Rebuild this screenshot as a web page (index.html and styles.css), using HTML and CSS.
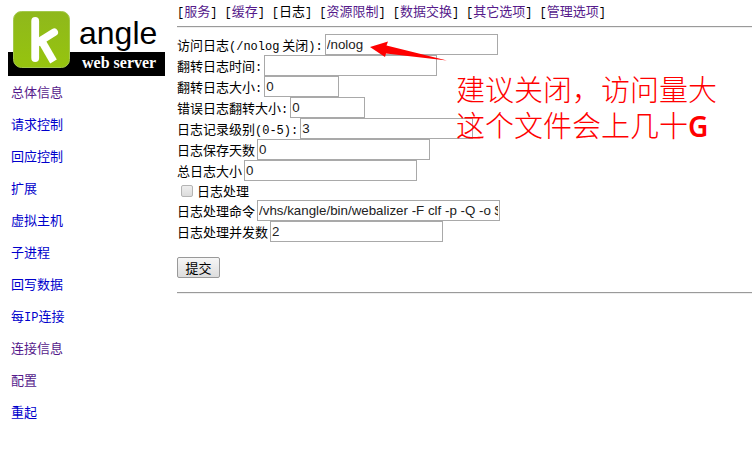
FILE: index.html
```html
<!DOCTYPE html>
<html lang="zh-CN">
<head>
<meta charset="utf-8">
<title>kangle web server</title>
<link rel="stylesheet" href="styles.css">
</head>
<body>
<div class="page">
  <aside class="sidebar">
    <svg class="logo" viewBox="0 0 157 66" role="img" aria-label="kangle web server">
      <defs>
        <linearGradient id="tile" x1="0" y1="0" x2="0" y2="1">
          <stop offset="0" stop-color="#8fb81c"/>
          <stop offset="1" stop-color="#96c40e"/>
        </linearGradient>
      </defs>
      <rect x="0" y="42" width="157" height="24" fill="#000"/>
      <rect x="5.500" y="1.500" width="56" height="56" rx="8" fill="url(#tile)" stroke="#a3c94b"/>
      <path d="M27.200 11V48" fill="none" stroke="#fff" stroke-width="7.800" stroke-linecap="round"/>
      <path d="M46.200 22.300L29 33" fill="none" stroke="#fff" stroke-width="7.600" stroke-linecap="round"/>
      <path d="M32.500 29L45.500 51.500" fill="none" stroke="#fff" stroke-width="7.600"/>
      <text class="logo-name" x="71" y="34">angle</text>
      <text class="logo-sub" x="74" y="58">web server</text>
    </svg>
    <nav class="menu">
      <a class="visited" href="#">总体信息</a>
      <a href="#">请求控制</a>
      <a href="#">回应控制</a>
      <a href="#">扩展</a>
      <a href="#">虚拟主机</a>
      <a href="#">子进程</a>
      <a href="#">回写数据</a>
      <a href="#">每<span class="latin">IP</span>连接</a>
      <a class="visited" href="#">连接信息</a>
      <a class="visited" href="#">配置</a>
      <a href="#">重起</a>
    </nav>
  </aside>
  <main class="content">
    <nav class="tabs">
      <span class="tab">[<a class="visited" href="#">服务</a>]</span>
      <span class="tab">[<a class="visited" href="#">缓存</a>]</span>
      <span class="tab">[<span class="current">日志</span>]</span>
      <span class="tab">[<a class="visited" href="#">资源限制</a>]</span>
      <span class="tab">[<a class="visited" href="#">数据交换</a>]</span>
      <span class="tab">[<a class="visited" href="#">其它选项</a>]</span>
      <span class="tab">[<a class="visited" href="#">管理选项</a>]</span>
    </nav>
    <hr>
    <form class="form">
      <div class="row"><label for="access">访问日志<span class="latin">(/nolog</span> 关闭<span class="latin">):</span></label><input type="text" id="access" value="/nolog"></div>
      <div class="row"><label for="rotate-time">翻转日志时间<span class="latin">:</span></label><input type="text" id="rotate-time"></div>
      <div class="row"><label for="rotate-size">翻转日志大小<span class="latin">:</span></label><input class="short" type="text" id="rotate-size" value="0"></div>
      <div class="row"><label for="error-size">错误日志翻转大小<span class="latin">:</span></label><input class="short" type="text" id="error-size" value="0"></div>
      <div class="row"><label for="level">日志记录级别<span class="latin">(0-5):</span></label><input type="text" id="level" value="3"></div>
      <div class="row"><label for="days">日志保存天数</label><input type="text" id="days" value="0"></div>
      <div class="row"><label for="total">总日志大小</label><input type="text" id="total" value="0"></div>
      <div class="row check"><input type="checkbox" id="handle"><label for="handle">日志处理</label></div>
      <div class="row"><label for="command">日志处理命令</label><input class="long" type="text" id="command" value="/vhs/kangle/bin/webalizer -F clf -p -Q -o $"></div>
      <div class="row"><label for="workers">日志处理并发数</label><input type="text" id="workers" value="2"></div>
      <button class="submit" type="submit">提交</button>
    </form>
    <hr>
    <svg class="arrow" viewBox="0 0 78 22" aria-hidden="true">
      <path d="M0 7L18 1.500L16.500 5.500L77 20.500L16 13.500L15 17Z" fill="#f00"/>
    </svg>
    <p class="note">建议关闭，访问量大<br>这个文件会上几十<b>G</b></p>
  </main>
</div>
</body>
</html>
```
FILE: styles.css
```css
* {
  box-sizing: border-box;
}

body {
  margin: 0;
  background: #fff;
  color: #000;
  font-family: "Noto Sans CJK SC", sans-serif;
  font-size: 13px;
  line-height: 20px;
}

a {
  color: #0000cc;
  text-decoration: none;
}

a.visited {
  color: #551a8b;
}

.page {
  display: grid;
  grid-template-columns: 169px 1fr;
}

.sidebar {
  padding: 10px 4px 0 8px;
}

.logo {
  display: block;
  width: 100%;
}

.logo-name {
  font-family: "Liberation Sans", Arial, sans-serif;
  font-size: 32px;
}

.logo-sub {
  font-family: "Liberation Serif", serif;
  font-size: 16px;
  font-weight: bold;
  fill: #fff;
}

.menu {
  display: flex;
  flex-direction: column;
  align-items: flex-start;
  gap: 12px;
  padding: 6px 3px;
}

.latin {
  font-family: "Liberation Mono", monospace;
  font-size: 12px;
  line-height: 1;
}

.content {
  position: relative;
  min-width: 0;
  padding: 1px 0 0 8px;
}

.tabs {
  display: flex;
  gap: 7px;
  height: 22px;
  white-space: nowrap;
}

.tab {
  font-family: "Liberation Mono", monospace;
  font-size: 12px;
}

.tab a,
.current {
  font-family: "Noto Sans CJK SC", sans-serif;
  font-size: 13px;
}

hr {
  height: 2px;
  margin: 3px 0 0;
  border: 0;
  border-top: 1px solid #9a9a9a;
  border-bottom: 1px solid #eee;
}

.form {
  padding: 6px 0 11px;
}

.row {
  display: flex;
  align-items: center;
  gap: 2px;
  height: 21px;
  white-space: nowrap;
}

.row input[type="text"] {
  width: 173px;
  height: 21px;
  margin: 0;
  padding: 1px;
  border: 1px solid #a9a9a9;
  border-radius: 0;
  background: #fff;
  color: #222;
  font-family: "Liberation Sans", Arial, sans-serif;
}

.row input.short {
  width: 75px;
}

.row input.long {
  width: 243px;
}

.check {
  height: 19px;
  gap: 4px;
  padding: 0 4px;
}

.check input {
  appearance: none;
  width: 12px;
  height: 12px;
  margin: 0;
  border: 1px solid #b4b4b4;
  border-radius: 2px;
  background: linear-gradient(#eee, #dcdcdc);
}

.submit {
  display: block;
  width: 43px;
  height: 21px;
  margin-top: 15px;
  padding: 0;
  border: 1px solid #999;
  border-radius: 2px;
  background: linear-gradient(#f6f6f6, #ddd);
  color: #000;
  font-family: "Noto Sans CJK SC", sans-serif;
  font-size: 13px;
  line-height: 18px;
}

.arrow {
  position: absolute;
  top: 40px;
  left: 201px;
  width: 78px;
}

.note {
  position: absolute;
  top: 70px;
  left: 287px;
  margin: 0;
  color: #f00;
  font-size: 29px;
  font-weight: 300;
  line-height: 36px;
  white-space: nowrap;
}

.note b {
  font-family: "Noto Sans", sans-serif;
  font-size: 28px;
  font-weight: 600;
  line-height: 1;
}
```
